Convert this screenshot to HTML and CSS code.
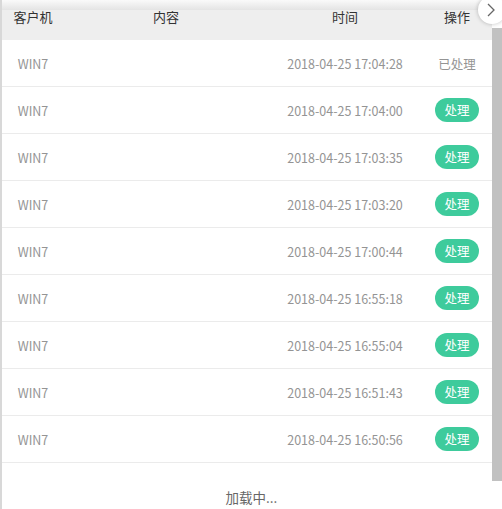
FILE: index.html
```html
<!DOCTYPE html>
<html lang="zh">
<head>
<meta charset="utf-8">
<link rel="stylesheet" href="styles.css">
</head>
<body>
<div class="page">
  <div class="edge"></div>
  <div class="panel">
    <div class="shadow"></div>
    <div class="row head">
      <div class="cell">客户机</div>
      <div class="cell">内容</div>
      <div class="cell">时间</div>
      <div class="cell">操作</div>
    </div>
    <div class="row"><div class="cell">WIN7</div><div class="cell"></div><div class="cell">2018-04-25 17:04:28</div><div class="cell"><span class="done">已处理</span></div></div>
    <div class="row"><div class="cell">WIN7</div><div class="cell"></div><div class="cell">2018-04-25 17:04:00</div><div class="cell"><span class="btn">处理</span></div></div>
    <div class="row"><div class="cell">WIN7</div><div class="cell"></div><div class="cell">2018-04-25 17:03:35</div><div class="cell"><span class="btn">处理</span></div></div>
    <div class="row"><div class="cell">WIN7</div><div class="cell"></div><div class="cell">2018-04-25 17:03:20</div><div class="cell"><span class="btn">处理</span></div></div>
    <div class="row"><div class="cell">WIN7</div><div class="cell"></div><div class="cell">2018-04-25 17:00:44</div><div class="cell"><span class="btn">处理</span></div></div>
    <div class="row"><div class="cell">WIN7</div><div class="cell"></div><div class="cell">2018-04-25 16:55:18</div><div class="cell"><span class="btn">处理</span></div></div>
    <div class="row"><div class="cell">WIN7</div><div class="cell"></div><div class="cell">2018-04-25 16:55:04</div><div class="cell"><span class="btn">处理</span></div></div>
    <div class="row"><div class="cell">WIN7</div><div class="cell"></div><div class="cell">2018-04-25 16:51:43</div><div class="cell"><span class="btn">处理</span></div></div>
    <div class="row"><div class="cell">WIN7</div><div class="cell"></div><div class="cell">2018-04-25 16:50:56</div><div class="cell"><span class="btn">处理</span></div></div>
    <div class="loading">加载中...</div>
  </div>
  <div class="scroll"><div class="thumb"></div></div>
</div>
<div class="close"><svg width="24" height="24" viewBox="0 0 24 24"><path d="M10 6 L16 12 L10 18" fill="none" stroke="#666" stroke-width="1.3"/></svg></div>
</body>
</html>
```
FILE: styles.css
```css
html, body {
  margin: 0;
  padding: 0;
  background: #fff;
}
body {
  width: 502px;
  height: 509px;
  overflow: hidden;
  position: relative;
  font-family: "Noto Sans CJK SC", "Noto Sans", sans-serif;
}
.page {
  display: flex;
  height: 509px;
}
.edge {
  width: 2px;
  background: #d8d8d8;
  flex: none;
}
.panel {
  width: 490px;
  flex: none;
  display: flex;
  flex-direction: column;
}
.shadow {
  height: 10px;
  background: linear-gradient(to bottom, #fafafa, #e4e4e4);
}
.row {
  display: grid;
  grid-template-columns: 62px 204px 154px 70px;
  height: 46px;
  border-bottom: 1px solid #ebebeb;
  align-items: center;
  font-size: 12.5px;
  color: #949494;
}
.row.head {
  height: 30px;
  border-bottom: none;
  background: #eeeeee;
  align-items: start;
  color: #333;
  font-size: 13px;
  line-height: 13px;
}
.cell {
  text-align: center;
  white-space: nowrap;
}
.btn {
  display: inline-block;
  width: 44px;
  height: 24px;
  line-height: 24px;
  border-radius: 12px;
  background: #3ecb9c;
  color: #fff;
  font-size: 12.5px;
}
.done {
  color: #949494;
}
.loading {
  text-align: center;
  font-size: 13.5px;
  color: #666;
  padding-top: 24px;
  padding-left: 9px;
}
.scroll {
  width: 10px;
  flex: none;
  padding-top: 28px;
}
.thumb {
  height: 453px;
  background: #c1c1c1;
}
.close {
  position: absolute;
  left: 478px;
  top: -4px;
  width: 28px;
  height: 28px;
  border-radius: 50%;
  background: #fff;
  box-shadow: 0 0 4px rgba(0,0,0,0.25);
  display: flex;
  align-items: center;
  justify-content: flex-start;
}
```
